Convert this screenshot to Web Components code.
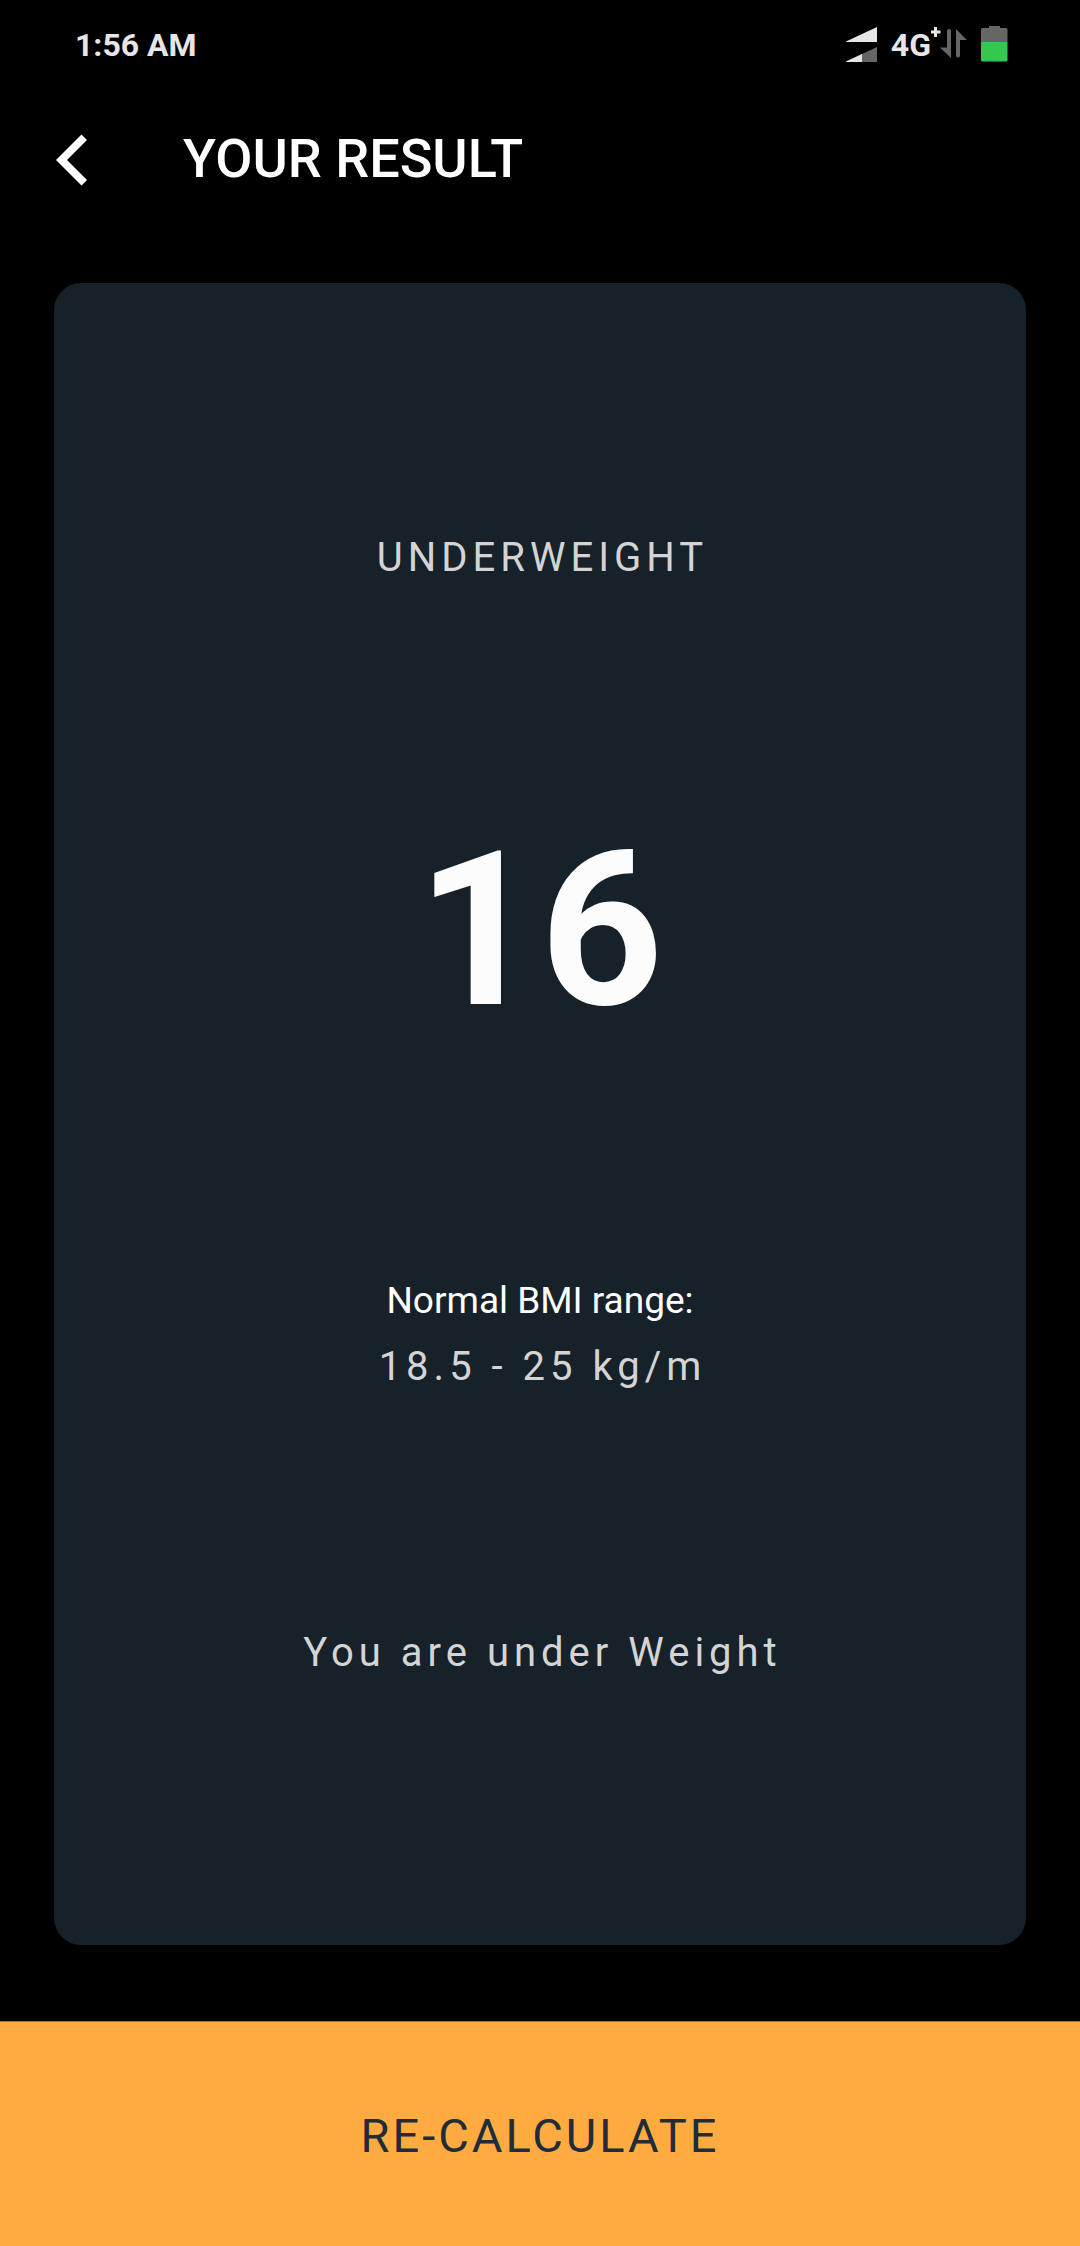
<!DOCTYPE html>
<html lang="en">
<head>
<meta charset="utf-8">
<meta name="viewport" content="width=device-width, initial-scale=1">
<title>BMI Calculator</title>
<style>
  body { margin: 0; background: #000; font-family: Roboto, sans-serif; }
</style>
</head>
<body>
<bmi-result-page>
  <status-bar slot="top" time="1:56 AM" network="4G"></status-bar>
  <app-bar slot="top">YOUR RESULT</app-bar>
  <result-card>
    <span slot="verdict">UNDERWEIGHT</span>
    <span slot="score">16</span>
    <span slot="range-label">Normal BMI range:</span>
    <span slot="range">18.5 - 25 kg/m</span>
    <span slot="advice">You are under Weight</span>
  </result-card>
  <bottom-button slot="bottom">RE-CALCULATE</bottom-button>
</bmi-result-page>

<script>
  class Base extends HTMLElement {
    connectedCallback() {
      if (!this.shadowRoot) this.attachShadow({ mode: 'open' }).innerHTML = this.render();
    }
  }

  customElements.define('bmi-result-page', class extends Base {
    render() {
      return `<style>
        :host { display: flex; flex-direction: column; min-height: 100vh; background: #000; }
        main { flex: 1; display: flex; padding: 80px 54px 76px; }
        main ::slotted(*) { flex: 1; }
      </style>
      <slot name="top"></slot><main><slot></slot></main><slot name="bottom"></slot>`;
    }
  });

  customElements.define('status-bar', class extends Base {
    render() {
      return `<style>
        :host { display: flex; justify-content: space-between; align-items: center; height: 38px;
          padding: 26px 72px 24px 75px; color: #e6e6e6; font-size: 32px; line-height: 38px; font-weight: 700; }
        .icons { display: flex; align-items: center; }
        .net { margin-left: 13px; }
        svg { display: block; }
      </style>
      <time>${this.getAttribute('time')}</time>
      <div class="icons">
        <svg width="32" height="38" viewBox="0 0 32 38" aria-hidden="true">
          <path fill="#e6e6e6" d="M0 15.5 31 1v15H0z"/>
          <path fill="#666" d="M0 35.5 31 21v15H0z"/>
          <path fill="#e6e6e6" d="M0 35.5 16 28v8H0z"/>
        </svg>
        <span class="net">${this.getAttribute('network')}</span>
        <svg width="77" height="38" viewBox="931 26 77 38" aria-hidden="true">
          <path fill="#e6e6e6" d="M934 27h3v3.500h3.500v3H937V37h-3v-3.500h-3v-3h3z"/>
          <path fill="#666" d="M947 31q0-2 2-2t2 2v27L940 47.500h7zM956 55.500q0 2 2 2t2-2V40h7L956 29z"/>
          <path fill="#666" d="M982 28h7v-1.500q0-1 1-1h9q1 0 1 1V28h6q1.500 0 1.500 1.500V42h-26.500V29.500Q981 28 982 28z"/>
          <path fill="#34c84f" d="M981 42h26.500v18q0 1.500-1.500 1.500h-23.500q-1.500 0-1.500-1.500z"/>
        </svg>
      </div>`;
    }
  });

  customElements.define('app-bar', class extends Base {
    render() {
      return `<style>
        :host { display: flex; align-items: center; gap: 95px; height: 64px; padding: 39px 56px 12px; color: #fff; }
        button { display: block; border: 0; padding: 0; background: none; color: inherit; }
        svg { display: block; }
        h1 { margin: 0; font-size: 54px; line-height: 64px; font-weight: 500; }
      </style>
      <button type="button" aria-label="Back">
        <svg width="32" height="54" viewBox="0 0 32 54"><path fill="currentColor" d="M0 28 25.500 2.500 31 8 11 28l20 20-5.500 5.500z"/></svg>
      </button>
      <h1><slot></slot></h1>`;
    }
  });

  customElements.define('result-card', class extends Base {
    render() {
      return `<style>
        :host { display: flex; flex-direction: column; align-items: center; justify-content: space-evenly;
          padding: 29px 27px 46px; border-radius: 27px; background: #172129; color: #d4d4d4; text-align: center; }
        p { margin: 0; }
        .body { font-size: 40px; line-height: 48px; letter-spacing: 5px; text-indent: 5px; }
        .score { font-size: 215px; line-height: 253px; font-weight: 700; color: #fcfcfc; }
        .range { padding-bottom: 16px; display: flex; flex-direction: column; gap: 20px; }
        .label { font-size: 37px; line-height: 44px; color: #fff; }
      </style>
      <p class="body"><slot name="verdict"></slot></p>
      <p class="score"><slot name="score"></slot></p>
      <div class="range">
        <p class="label"><slot name="range-label"></slot></p>
        <p class="body"><slot name="range"></slot></p>
      </div>
      <p class="body"><slot name="advice"></slot></p>`;
    }
  });

  customElements.define('bottom-button', class extends Base {
    render() {
      return `<style>
        :host { display: block; }
        button { display: block; width: 100%; border: 0; border-top: 1px solid #a3723a; padding: 86px 0 82px;
          background: #ffab40; color: #202d39; font: 400 47px/56px Roboto, sans-serif; letter-spacing: 3px; }
      </style>
      <button type="button"><slot></slot></button>`;
    }
  });
</script>
</body>
</html>
